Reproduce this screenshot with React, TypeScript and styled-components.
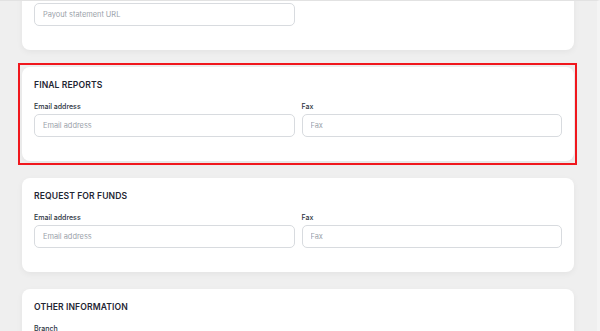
import React from "react";
import styled, { createGlobalStyle } from "styled-components";

const GlobalStyle = createGlobalStyle`
  html, body {
    margin: 0;
    padding: 0;
    background: #efefef;
    overflow: hidden;
  }
  * {
    box-sizing: border-box;
  }
`;

const Page = styled.div`
  width: 600px;
  height: 331px;
  overflow: hidden;
  background-color: #efefef;
  border-top: 1px solid #e2e2e2;
  border-right: 3px solid #f4f4f4;
  font-family: Inter, "Liberation Sans", sans-serif;
`;

const Column = styled.div`
  display: flex;
  flex-direction: column;
  gap: 17px;
  margin: -45px 23px 0 22px;
`;

const Card = styled.section<{ $selected?: boolean }>`
  position: relative;
  background-color: #ffffff;
  border-radius: 8px;
  padding: 12px 12px 24px 12px;
  box-shadow: 0 2px 6px rgba(0, 0, 0, 0.05);
  &::after {
    content: "";
    display: ${(p) => (p.$selected ? "block" : "none")};
    position: absolute;
    inset: -4px -3px -4px -4px;
    border: 2px solid #f0171d;
    pointer-events: none;
  }
`;

const Title = styled.h3`
  margin: 0 0 11px 0;
  font-size: 8.6px;
  line-height: 12px;
  font-weight: 600;
  letter-spacing: 0.1px;
  color: #1f2633;
  text-transform: uppercase;
`;

const Fields = styled.div<{ $cols: number }>`
  display: grid;
  grid-template-columns: repeat(${(p) => p.$cols}, 1fr);
  column-gap: 7px;
`;

const Field = styled.label`
  display: flex;
  flex-direction: column;
  gap: 2px;
`;

const Label = styled.span`
  font-size: 7px;
  line-height: 10px;
  font-weight: 500;
  color: #2b3340;
`;

const Input = styled.input`
  height: 23px;
  width: 100%;
  padding: 0 8px;
  border: 1px solid #d8dbdf;
  border-radius: 5px;
  background: #ffffff;
  font-family: Inter, "Liberation Sans", sans-serif;
  font-size: 7.4px;
  color: #2b3340;
  outline: none;
  &::placeholder {
    color: #9aa1a9;
  }
`;

type FieldDef = { label: string; placeholder: string };

const sections: { title: string; selected?: boolean; cols: number; fields: FieldDef[] }[] = [
  {
    title: "Payout information",
    cols: 2,
    fields: [{ label: "Payout statement URL", placeholder: "Payout statement URL" }],
  },
  {
    title: "Final reports",
    selected: true,
    cols: 2,
    fields: [
      { label: "Email address", placeholder: "Email address" },
      { label: "Fax", placeholder: "Fax" },
    ],
  },
  {
    title: "Request for funds",
    cols: 2,
    fields: [
      { label: "Email address", placeholder: "Email address" },
      { label: "Fax", placeholder: "Fax" },
    ],
  },
  {
    title: "Other information",
    cols: 2,
    fields: [{ label: "Branch", placeholder: "Branch" }],
  },
];

const App = () => {
  return (
    <Page>
      <GlobalStyle />
      <Column>
        {sections.map((section) => (
          <Card key={section.title} $selected={section.selected}>
            <Title>{section.title}</Title>
            <Fields $cols={section.cols}>
              {section.fields.map((f) => (
                <Field key={f.label}>
                  <Label>{f.label}</Label>
                  <Input placeholder={f.placeholder} />
                </Field>
              ))}
            </Fields>
          </Card>
        ))}
      </Column>
    </Page>
  );
};

export default App;
